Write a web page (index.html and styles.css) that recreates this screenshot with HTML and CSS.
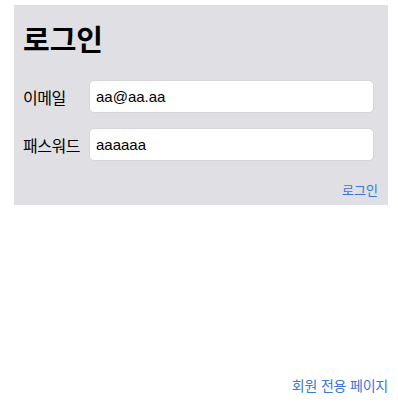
FILE: index.html
```html
<!DOCTYPE html>
<html lang="ko">
<head>
<meta charset="utf-8">
<title>로그인</title>
<link rel="stylesheet" href="styles.css">
</head>
<body>
<section class="panel">
  <h1 class="title">로그인</h1>
  <form class="form">
    <label class="label" for="email">이메일</label>
    <input class="field" id="email" type="text" value="aa@aa.aa">
    <label class="label" for="pw">패스워드</label>
    <input class="field" id="pw" type="text" value="aaaaaa">
  </form>
  <div class="actions"><a class="link" href="#">로그인</a></div>
</section>
<footer class="footer"><a class="link link-lg" href="#">회원 전용 페이지</a></footer>
</body>
</html>
```
FILE: styles.css
```css
html, body {
  margin: 0;
  padding: 0;
}
body {
  display: flex;
  flex-direction: column;
  min-height: 100vh;
  background: #ffffff;
  color: #000000;
  font-family: "Noto Sans CJK KR", "Noto Sans", sans-serif;
}
.panel {
  margin: 5px 10px 0 14px;
  padding: 0 10px 5px 9px;
  background: #dfdfe4;
}
.title {
  margin: 16px 0 25px;
  font-size: 29px;
  line-height: 34px;
  font-weight: 700;
}
.form {
  display: grid;
  grid-template-columns: 66px 1fr;
  row-gap: 15px;
  align-items: center;
  margin: 0 4px 0 0;
}
.label {
  font-size: 16px;
  line-height: 20px;
  letter-spacing: -0.5px;
}
.field {
  box-sizing: border-box;
  height: 33px;
  width: 100%;
  margin: 0;
  padding: 0 6px;
  border: 1px solid #d6d6db;
  border-radius: 5px;
  background: #ffffff;
  font-family: "Liberation Sans", Arial, sans-serif;
  font-size: 15px;
  color: #000;
  outline: none;
}
.actions {
  margin-top: 19px;
  display: flex;
  justify-content: flex-end;
  line-height: 20px;
}
.link {
  color: #3676d6;
  text-decoration: none;
  font-size: 13px;
}
.footer {
  margin-top: auto;
  display: flex;
  justify-content: flex-end;
  padding: 0 10px 15px 0;
  line-height: 20px;
}
.link-lg {
  font-size: 14px;
  letter-spacing: -0.2px;
}
```
